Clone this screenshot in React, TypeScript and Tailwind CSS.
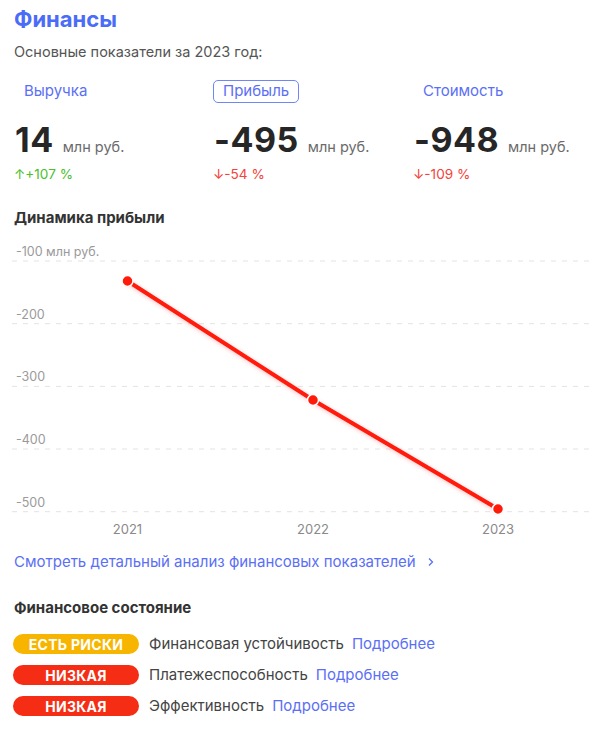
import React from "react";

const font = { fontFamily: "Inter, 'Noto Sans', sans-serif" };

function Metric({ label, active, value, change, up }: { label: string; active?: boolean; value: string; change: string; up?: boolean }) {
  return (
    <div className="flex flex-col">
      <div className="flex">
        <span
          className={
            "h-[23px] flex items-center px-[9px] rounded-[5px] border text-[15px] text-[#5b6ff5] " +
            (active ? "border-[#6f86f7]" : "border-transparent")
          }
        >
          {label}
        </span>
      </div>
      <div className="mt-[17px] flex items-baseline gap-[9px] pl-[1px]">
        <span className="text-[34px] leading-[40px] font-bold text-[#262626] tracking-[0.5px]">{value}</span>
        <span className="text-[14.5px] text-[#6b6b6b]">млн руб.</span>
      </div>
      <div className={"mt-[5px] text-[13.6px] leading-[18px] " + (up ? "text-[#4cbf2a]" : "text-[#f4433a]")}>
        {up ? "↑" : "↓"}
        {change}
      </div>
    </div>
  );
}

function Chart() {
  const grid = [33, 95.7, 158.4, 221, 283.7];
  const labels = ["-100 млн руб.", "-200", "-300", "-400", "-500"];
  const pts: [number, number][] = [
    [127.5, 53],
    [313, 172],
    [498, 281],
  ];
  return (
    <svg width="591" height="315" className="block -ml-[14px]" style={font}>
      <defs>
        <filter id="sh" x="-10%" y="-10%" width="120%" height="120%">
          <feGaussianBlur in="SourceAlpha" stdDeviation="2" />
          <feOffset dx="0" dy="1" result="b" />
          <feFlood floodColor="#ff1a0a" floodOpacity="0.25" />
          <feComposite in2="b" operator="in" />
          <feMerge>
            <feMergeNode />
            <feMergeNode in="SourceGraphic" />
          </feMerge>
        </filter>
      </defs>
      {grid.map((y, i) => (
        <g key={i}>
          <line x1="12" x2="591" y1={y} y2={y} stroke="#e3e3e3" strokeWidth="1" strokeDasharray="5 6" />
          <text x="16" y={y - 5} fontSize="12.5" fill="#9a9a9a">
            {labels[i]}
          </text>
        </g>
      ))}
      <polyline
        points={pts.map((p) => p.join(",")).join(" ")}
        fill="none"
        stroke="#ff1a0a"
        strokeWidth="4"
        strokeLinecap="round"
        filter="url(#sh)"
      />
      {pts.map((p, i) => (
        <circle key={i} cx={p[0]} cy={p[1]} r="5.5" fill="#ff1a0a" stroke="#fff" strokeWidth="1.5" />
      ))}
      {["2021", "2022", "2023"].map((y, i) => (
        <text key={y} x={pts[i][0]} y="305.5" fontSize="13" fill="#8a8a8a" textAnchor="middle">
          {y}
        </text>
      ))}
    </svg>
  );
}

function StatusRow({ badge, color, label }: { badge: string; color: string; label: string }) {
  return (
    <div className="flex items-center h-[20px]">
      <span
        className={
          "w-[126px] h-[20px] rounded-full flex items-center justify-center text-white font-bold text-[14px] tracking-[0.3px] " + color
        }
      >
        {badge}
      </span>
      <span className="ml-[10px] text-[15px] text-[#444]">{label}</span>
      <span className="ml-[8px] text-[15px] text-[#5b6ff5]">Подробнее</span>
    </div>
  );
}

export default function App() {
  return (
    <div className="w-[591px] h-[736px] bg-white pl-[14px] overflow-hidden" style={font}>
      <div className="pt-[5px] text-[22px] leading-[28px] font-bold text-[#4a6cf7]">Финансы</div>
      <div className="mt-[9px] text-[14.5px] leading-[20px] text-[#555]">Основные показатели за 2023 год:</div>
      <div className="mt-[18px] grid grid-cols-[199px_200px_1fr]">
        <Metric label="Выручка" value="14" change="+107 %" up />
        <Metric label="Прибыль" active value="-495" change="-54 %" />
        <Metric label="Стоимость" value="-948" change="-109 %" />
      </div>
      <div className="mt-[25px] text-[15px] leading-[20px] font-bold text-[#333]">Динамика прибыли</div>
      <Chart />
      <div className="mt-[9px] flex items-center gap-[8px] text-[15px] leading-[20px] text-[#5b6ff5]">
        <span>Смотреть детальный анализ финансовых показателей</span>
        <svg width="10" height="10" viewBox="0 0 10 10" className="ml-[2px]">
          <path d="M3 1.5 L6.5 5 L3 8.5" fill="none" stroke="#5b6ff5" strokeWidth="1.3" />
        </svg>
      </div>
      <div className="mt-[26px] text-[15px] leading-[20px] font-bold text-[#333]">Финансовое состояние</div>
      <div className="mt-[16px] flex flex-col gap-[11px] -ml-[1px]">
        <StatusRow badge="ЕСТЬ РИСКИ" color="bg-[#f7b500]" label="Финансовая устойчивость" />
        <StatusRow badge="НИЗКАЯ" color="bg-[#f52d14]" label="Платежеспособность" />
        <StatusRow badge="НИЗКАЯ" color="bg-[#f52d14]" label="Эффективность" />
      </div>
    </div>
  );
}
